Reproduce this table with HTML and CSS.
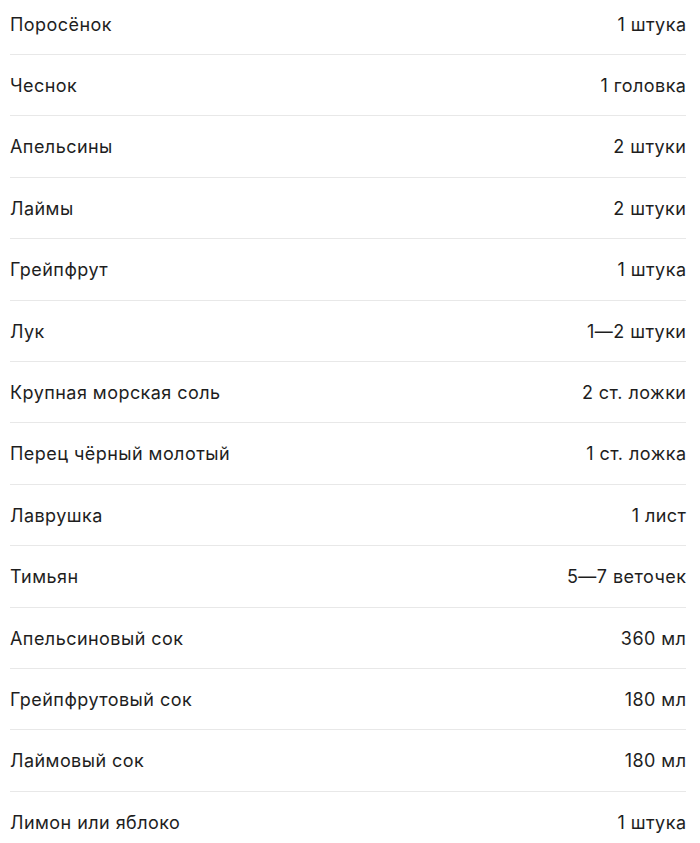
FILE: index.html
```html
<!DOCTYPE html>
<html lang="ru">
<head>
<meta charset="utf-8">
<link rel="stylesheet" href="styles.css">
</head>
<body>
<ul class="list">
  <li class="row"><span class="name">Поросёнок</span><span class="qty">1 штука</span></li>
  <li class="row"><span class="name">Чеснок</span><span class="qty">1 головка</span></li>
  <li class="row"><span class="name">Апельсины</span><span class="qty">2 штуки</span></li>
  <li class="row"><span class="name">Лаймы</span><span class="qty">2 штуки</span></li>
  <li class="row"><span class="name">Грейпфрут</span><span class="qty">1 штука</span></li>
  <li class="row"><span class="name">Лук</span><span class="qty">1—2 штуки</span></li>
  <li class="row"><span class="name">Крупная морская соль</span><span class="qty">2 ст. ложки</span></li>
  <li class="row"><span class="name">Перец чёрный молотый</span><span class="qty">1 ст. ложка</span></li>
  <li class="row"><span class="name">Лаврушка</span><span class="qty">1 лист</span></li>
  <li class="row"><span class="name">Тимьян</span><span class="qty">5—7 веточек</span></li>
  <li class="row"><span class="name">Апельсиновый сок</span><span class="qty">360 мл</span></li>
  <li class="row"><span class="name">Грейпфрутовый сок</span><span class="qty">180 мл</span></li>
  <li class="row"><span class="name">Лаймовый сок</span><span class="qty">180 мл</span></li>
  <li class="row"><span class="name">Лимон или яблоко</span><span class="qty">1 штука</span></li>
</ul>
</body>
</html>
```
FILE: styles.css
```css
html, body {
  margin: 0;
  padding: 0;
  background: #fff;
}
body {
  font-family: Inter, Roboto, "Liberation Sans", sans-serif;
  font-size: 18px;
  letter-spacing: 0.45px;
  color: #1e1e1e;
  overflow: hidden;
}
.list {
  list-style: none;
  margin: -6.4px 14px 0 10px;
  padding: 0;
}
.row {
  display: flex;
  justify-content: space-between;
  align-items: center;
  padding: 17px 0 15px;
  line-height: 28.4px;
  border-bottom: 1px solid #e8e8e8;
}
.qty {
  margin-right: -0.45px;
}
```
